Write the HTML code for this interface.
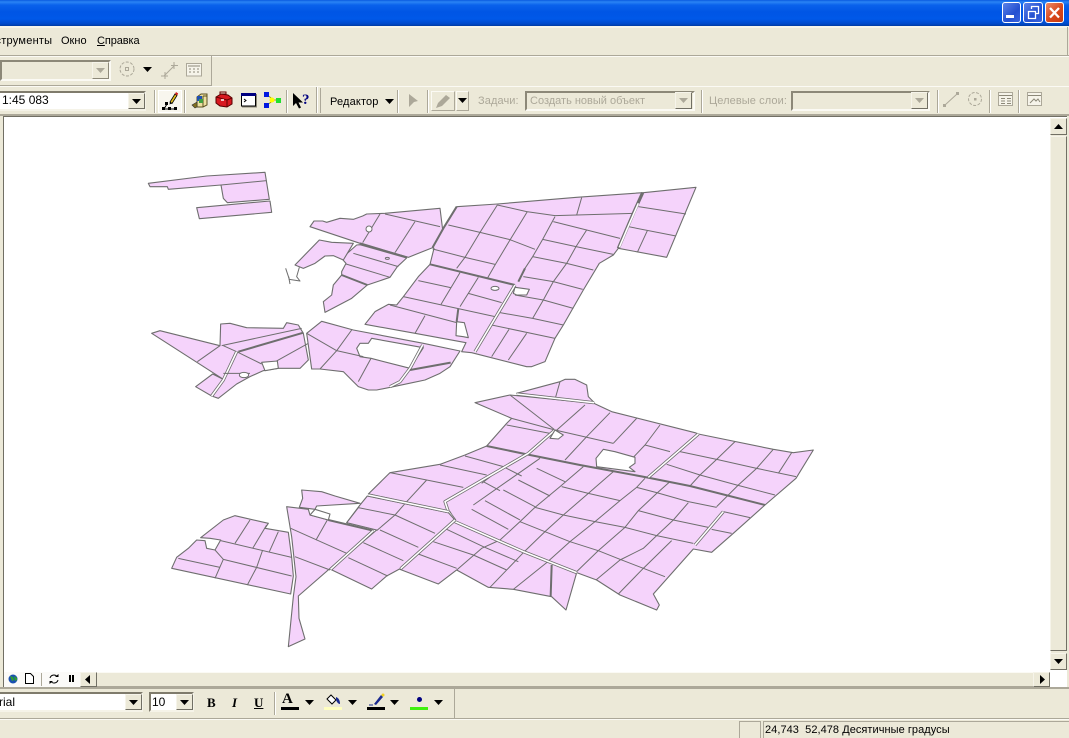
<!DOCTYPE html>
<html><head><meta charset="utf-8"><style>
html,body{margin:0;padding:0;background:#ece9d8}
#r{position:relative;width:1069px;height:738px;overflow:hidden;background:#ece9d8;font:11px "Liberation Sans",sans-serif;color:#000}
#r div,#r span.t{position:absolute}
.t{white-space:nowrap;line-height:13px}
.g{color:#aca899}
.sep{width:1px;background:#aca899;border-right:1px solid #fff}
.combo{background:#fff;border:2px solid #7f7b6c;border-right-color:#f5f3e8;border-bottom-color:#f5f3e8;box-sizing:border-box}
.off{border:2px solid #8c8878;border-right-color:#fbfaf4;border-bottom-color:#fbfaf4;box-sizing:border-box}
.btn{background:#ece9d8;border:1px solid #f6f4ea;border-right-color:#716f64;border-bottom-color:#716f64;box-sizing:border-box}
.win{border:1px solid #fff;border-radius:3px;box-sizing:border-box;background:linear-gradient(135deg,#5b82e8,#2450d0 60%,#3a64de)}
svg{position:absolute;overflow:visible}
#m polygon,#m polyline,#m path,#m ellipse,#m circle{vector-effect:non-scaling-stroke;stroke-linejoin:round}
#m polygon{fill:#f5d3fb;stroke:#6e6e6e;stroke-width:1.100}
#m .h{fill:#fff}
#m .l{fill:none;stroke:#6e6e6e;stroke-width:1}
#m .k{fill:none;stroke:#6e6e6e;stroke-width:2}
#m .ro{fill:none;stroke:#6e6e6e;stroke-width:3.200}
#m .ri{fill:none;stroke:#fff;stroke-width:1.600}
</style></head><body><div id="r">

<div style="left:0;top:0;width:1069px;height:26px;background:linear-gradient(#0a5ae0 0,#2a84f4 2px,#0a62ec 5px,#0055e5 12px,#0058e8 19px,#0048c8 24px,#003aa0 26px)"></div>
<div class="win" style="left:1002px;top:2px;width:19px;height:21px"></div>
<div style="left:1006px;top:15px;width:8px;height:3px;background:#fff"></div>
<div class="win" style="left:1023px;top:2px;width:20px;height:21px"></div>
<svg style="left:1023px;top:2px" width="20" height="21"><path d="M5.500 9.500h7v7h-7zM8.500 7V4.500h7v7h-3" fill="none" stroke="#fff" stroke-width="1.300"/></svg>
<div class="win" style="left:1045px;top:2px;width:19px;height:21px;background:linear-gradient(135deg,#ec8a6a,#d8481c 55%,#c83a10)"></div>
<svg style="left:1045px;top:2px" width="19" height="21"><path d="M5 6l9 9.500M14 6l-9 9.500" stroke="#fff" stroke-width="2.300"/></svg>

<div style="left:0;top:26px;width:1069px;height:2px;background:#f6f4ea"></div>
<span class="t" style="left:-19px;top:35px;letter-spacing:.25px">Инструменты</span>
<span class="t" style="left:61px;top:35px">Окно</span>
<span class="t" style="left:97px;top:35px;letter-spacing:-.1px"><u>С</u>правка</span>
<div style="left:0;top:55px;width:1069px;height:1px;background:#aca899"></div>
<div style="left:0;top:56px;width:1069px;height:1px;background:#fbfaf4"></div>
<div style="left:1067px;top:27px;width:1px;height:28px;background:#aca899"></div>

<div style="left:0;top:85px;width:212px;height:1px;background:#aca899"></div>
<div style="left:211px;top:56px;width:1px;height:30px;background:#aca899"></div>
<div class="off" style="left:0;top:60px;width:111px;height:21px"></div>
<div class="btn" style="left:92px;top:62px;width:17px;height:17px;border-right-color:#8c8878;border-bottom-color:#8c8878"></div>
<svg style="left:96px;top:68px" width="9" height="5"><path d="M0 0h9L4.500 5z" fill="#aca899"/></svg>
<svg style="left:118px;top:60px" width="20" height="20"><circle cx="9" cy="9" r="7" fill="none" stroke="#aca899" stroke-dasharray="3 1.500"/><rect x="7.500" y="7.500" width="3" height="3" fill="none" stroke="#aca899"/></svg>
<svg style="left:143px;top:67px" width="9" height="5"><path d="M0 0h9L4.500 5z" fill="#000"/></svg>
<svg style="left:161px;top:61px" width="18" height="18"><path d="M3 15L14 4M13 1v7M10 4.500h7M4 11v7M0 15h7" stroke="#aca899" fill="none"/></svg>
<svg style="left:186px;top:63px" width="16" height="14"><rect x=".5" y=".5" width="15" height="12.500" fill="#f6f4ea" stroke="#aca899"/><path d="M2 3h12M3 6h2M7 6h2M11 6h2M3 9h2M7 9h2M11 9h2" stroke="#8c8878"/></svg>

<div style="left:0;top:86px;width:1069px;height:1px;background:#fbfaf4"></div>
<div class="combo" style="left:0;top:91px;width:146px;height:20px;border-left:0"></div>
<span class="t" style="left:2px;top:94px;font-size:12px">1:45 083</span>
<div class="btn" style="left:128px;top:93px;width:17px;height:16px"></div>
<svg style="left:132px;top:99px" width="9" height="5"><path d="M0 0h9L4.500 5z"/></svg>
<div class="sep" style="left:154px;top:90px;height:23px"></div>

<div style="left:158px;top:90px;width:24px;height:23px;background:#f8f6ee;border:1px solid #fff;box-sizing:border-box"></div>
<svg style="left:158px;top:90px" width="24" height="23"><path d="M6 19h12M6 19l3-5" stroke="#000"/><rect x="4" y="17" width="3" height="3"/><rect x="10" y="17" width="3" height="3"/><rect x="16" y="17" width="3" height="3"/><rect x="7" y="12" width="3" height="3"/><path d="M12 12l5-8 2 1.500-5 8z" fill="#e6c020" stroke="#000" stroke-width=".8"/><path d="M17 4l1-2 2.200 1.500-1 2z" fill="#d02020"/><path d="M12 12l-.5 2.500 2.200-1z" fill="#000"/></svg>
<div class="sep" style="left:184px;top:90px;height:23px"></div>

<svg style="left:192px;top:91px" width="17" height="18"><path d="M5 6l4-3h6v11l-4 2H5z" fill="#ece0a0" stroke="#5a5020"/><path d="M11 5h4M11 5v11" stroke="#5a5020"/><rect x="5" y="5" width="5" height="5" fill="#2050b0"/><rect x="7" y="8" width="4" height="4" fill="#40a040"/><path d="M0 14l5-3v5l-2 1z" fill="#807020" stroke="#333" stroke-width=".6"/></svg>
<svg style="left:216px;top:92px" width="17" height="16"><path d="M0 5l5-3 7 1 4 3v6l-5 3-7-1-4-3z" fill="#d81820" stroke="#500"/><path d="M0 5l11 3 5-2M11 8v7" stroke="#600" fill="none"/><rect x="4" y="0" width="6" height="2" fill="none" stroke="#600"/><rect x="5" y="7" width="3" height="2" fill="#f0c0c0"/></svg>
<svg style="left:241px;top:93px" width="16" height="14"><rect x=".5" y=".5" width="14" height="12.500" fill="#fff" stroke="#000"/><rect x="0" y="0" width="15" height="3" fill="#000080"/><path d="M3 6l2 1.500L3 9" stroke="#000" fill="none"/><path d="M15.500 1v13H1" stroke="#8c8878" fill="none"/></svg>
<svg style="left:264px;top:92px" width="17" height="16"><path d="M3 3l7 5M3 13l7-5M10 8h5" stroke="#a0a000"/><rect x="0" y="0" width="5" height="5" fill="#0018e0"/><rect x="0" y="11" width="5" height="5" fill="#0018e0"/><circle cx="8" cy="8" r="2.500" fill="#ffff00"/><rect x="12" y="6" width="5" height="5" fill="#20e030"/></svg>
<div class="sep" style="left:286px;top:90px;height:23px"></div>
<svg style="left:293px;top:93px" width="18" height="16"><path d="M0 0v13l3-3 3 5.500 2-1-2.500-5H10z" fill="#000"/><text x="9" y="11" font-family="Liberation Serif,serif" font-size="15" font-weight="700" fill="#000080">?</text></svg>
<div class="sep" style="left:316px;top:87px;height:26px"></div>
<div style="left:320px;top:88px;width:1px;height:25px;background:#aca899"></div>

<span class="t" style="left:330px;top:96px;letter-spacing:.15px">Редактор</span>
<svg style="left:385px;top:99px" width="9" height="5"><path d="M0 0h9L4.500 5z"/></svg>
<div class="sep" style="left:397px;top:90px;height:23px"></div>
<svg style="left:408px;top:94px" width="11" height="14"><path d="M1 0l9 7-4 1-5 5z" fill="#aca899"/></svg>
<div class="sep" style="left:427px;top:90px;height:23px"></div>
<div class="btn" style="left:431px;top:91px;width:24px;height:20px;border-color:#fbfaf4 #aca899 #aca899 #fbfaf4"></div>
<svg style="left:435px;top:93px" width="16" height="16"><path d="M1 15l2-5 8-8 4 3-8 8z" fill="#aca899"/></svg>
<div class="btn" style="left:456px;top:91px;width:13px;height:20px;border-color:#fbfaf4 #aca899 #aca899 #fbfaf4"></div>
<svg style="left:458px;top:98px" width="9" height="5"><path d="M0 0h9L4.500 5z"/></svg>

<span class="t g" style="left:478px;top:95px;letter-spacing:.1px">Задачи:</span>
<div class="off" style="left:525px;top:91px;width:170px;height:20px"></div>
<span class="t g" style="left:530px;top:95px">Создать новый объект</span>
<div class="btn" style="left:675px;top:92px;width:17px;height:17px"></div>
<svg style="left:679px;top:98px" width="9" height="5"><path d="M0 0h9L4.500 5z" fill="#aca899"/></svg>
<div class="sep" style="left:701px;top:90px;height:23px"></div>
<span class="t g" style="left:709px;top:95px;letter-spacing:.1px">Целевые слои:</span>
<div class="off" style="left:791px;top:91px;width:139px;height:20px"></div>
<div class="btn" style="left:911px;top:92px;width:17px;height:17px"></div>
<svg style="left:915px;top:98px" width="9" height="5"><path d="M0 0h9L4.500 5z" fill="#aca899"/></svg>
<div class="sep" style="left:937px;top:90px;height:23px"></div>
<svg style="left:943px;top:91px" width="16" height="16"><path d="M2 14L14 3" stroke="#aca899"/><rect x="0" y="13" width="3" height="3" fill="#aca899"/><rect x="13" y="1" width="3" height="3" fill="#aca899"/></svg>
<svg style="left:967px;top:91px" width="17" height="17"><circle cx="8" cy="8" r="6.500" fill="none" stroke="#aca899" stroke-dasharray="3 1.500"/><rect x="7" y="7" width="2.500" height="2.500" fill="#aca899"/></svg>
<div class="sep" style="left:989px;top:90px;height:23px"></div>
<svg style="left:998px;top:92px" width="16" height="15"><rect x=".5" y=".5" width="14" height="13" fill="#f6f4ea" stroke="#aca899"/><path d="M1 3.500h13M3 6.500h4M9 6.500h4M3 9h4M9 9h4M3 11.500h4M9 11.500h4" stroke="#8c8878"/></svg>
<div class="sep" style="left:1018px;top:90px;height:23px"></div>
<svg style="left:1027px;top:92px" width="16" height="15"><rect x=".5" y=".5" width="14" height="13" fill="#f6f4ea" stroke="#aca899"/><path d="M1 3.500h13M3 11l4-4 2 2 2-2 2 3" stroke="#8c8878" fill="none"/></svg>

<div style="left:0;top:114px;width:1069px;height:2px;background:#aca899"></div>
<div style="left:3px;top:116px;width:1064px;height:1px;background:#716f64"></div>
<div style="left:3px;top:116px;width:1px;height:556px;background:#716f64"></div>
<div style="left:4px;top:117px;width:1063px;height:555px;background:#fff"></div>

<svg id="m" style="left:0;top:0" width="1069" height="738" viewBox="0 0 1069 738">
<g transform="translate(140 160) scale(.33333)">
<polygon points="25,70 200,48 375,37 388,118 262,128 250,115 243,75 85,88 82,80 30,80"/>
<polyline class="l" points="243,75 380,62"/>
<polygon points="170,143 390,123 395,157 178,176"/>
<polygon points="510,200 522,183 548,183 560,187 600,175 640,178 668,168 680,162 735,160 900,145 910,225 880,262 805,292 660,250"/>
<polyline class="l" points="720,162 668,248"/>
<polyline class="l" points="735,162 900,200"/>
<polyline class="l" points="825,185 765,278"/>
<circle class="h" cx="687" cy="207" r="9" stroke="#6e6e6e"/>
<polyline class="k" points="660,250 800,292"/>
<polygon points="660,254 800,294 772,320 750,352 682,375 635,415 555,457 550,425 575,405 580,375 605,345 605,335 618,310 605,295 650,255"/>
<polyline class="l" points="640,280 775,320"/>
<polyline class="l" points="618,312 750,352"/>
<polyline class="k" points="605,345 682,375"/>
<ellipse class="l" cx="742" cy="295" rx="6" ry="3"/>
<polygon points="465,315 538,240 575,247 640,250 610,300 580,287 555,288 525,310 490,325"/>
<polyline class="l" points="437,325 448,358 480,363 470,350 478,322"/>
<polyline class="l" points="450,372 446,350"/>
<polygon points="35,520 60,512 240,557 242,492 270,490 320,503 430,505 440,488 475,495 490,520 505,600 480,625 415,625 370,632 330,650 290,672 235,715 215,708 167,680 218,642 250,658"/>
<polyline class="l" points="245,557 485,505"/>
<polyline class="k" points="295,575 490,518"/>
<polyline class="l" points="240,557 172,605"/>
<polyline class="l" points="250,557 290,575 365,612"/>
<polyline class="ro" points="290,575 250,660 215,708"/>
<polyline class="ri" points="290,575 250,660 215,708"/>
<polyline class="l" points="250,640 330,640"/>
<polyline class="l" points="505,550 410,603"/>
<polygon style="fill:#fff" points="365,607 412,603 415,625 375,632"/>
<ellipse class="h" cx="312" cy="645" rx="14" ry="8" stroke="#6e6e6e"/>
</g>
<g transform="translate(360 170) scale(.33333)">
<polygon points="290,110 412,102 650,82 848,68 820,130 775,235 760,255 718,280 670,360 610,465 585,505 555,575 515,590 500,590 335,548 305,545 318,518 165,490 15,463 45,425 85,403 110,405 130,380 175,320 210,283 222,235 218,232 250,175"/>
<polygon points="850,68 1008,52 920,262 775,235 822,130"/>
<polyline class="l" points="835,110 978,132"/>
<polyline class="l" points="805,170 948,198"/>
<polyline class="l" points="862,182 832,247"/>
<polyline class="l" points="265,165 360,187 447,208 525,238"/>
<polyline class="l" points="412,105 500,125 585,137 820,130"/>
<polyline class="l" points="580,155 680,180 780,205"/>
<polyline class="l" points="650,135 665,83"/>
<polyline class="l" points="548,208 648,230 760,253"/>
<polyline class="l" points="518,260 620,280 700,300"/>
<polyline class="l" points="490,320 580,335 668,358"/>
<polyline class="l" points="465,375 550,390 640,415"/>
<polyline class="l" points="420,428 518,445 610,465"/>
<polyline class="l" points="395,465 585,505"/>
<polyline class="l" points="412,105 360,187 315,262 290,295"/>
<polyline class="l" points="502,125 447,215 405,285 382,325"/>
<polyline class="l" points="585,140 548,208 518,260 495,295"/>
<polyline class="l" points="680,180 648,230 620,280 580,335 550,390 518,445"/>
<polyline class="l" points="447,478 395,560"/>
<polyline class="l" points="500,490 445,570"/>
<polyline class="l" points="218,237 315,262 405,283"/>
<polyline class="l" points="175,332 272,353"/>
<polyline class="l" points="130,380 405,440"/>
<polyline class="l" points="300,308 243,403"/>
<polyline class="l" points="355,322 300,410"/>
<polyline class="l" points="325,370 425,398"/>
<polyline class="l" points="90,405 290,458"/>
<polyline class="l" points="195,437 165,490"/>
<polyline class="k" points="210,283 465,345"/>
<polyline class="k" points="218,232 250,175 290,110"/>
<polyline class="k" points="495,295 475,335"/>
<polyline class="ro" points="848,68 820,130 775,235"/>
<polyline class="ri" points="835,100 800,180 778,232"/>
<polyline class="ro" points="465,345 345,545"/>
<polyline class="ri" points="465,345 345,545"/>
<polyline class="k" points="295,415 290,455"/>
<polygon style="fill:#fff" points="290,455 313,458 325,503 310,500 288,497"/>
<polygon style="fill:#fff" points="465,352 508,358 500,375 470,375 460,370"/>
<ellipse class="h" cx="405" cy="355" rx="12" ry="6" stroke="#6e6e6e"/>
<polygon points="-160,490 -115,454 -20,480 190,520 300,543 270,590 240,610 195,630 100,650 50,660 25,660 -5,650 -50,605 -120,597 -145,597"/>
<polygon style="fill:#fff" points="0,520 25,520 35,505 190,533 150,595 33,565 0,560 -10,535"/>
<polyline class="l" points="-160,490 -70,542"/>
<polyline class="l" points="-25,480 -70,542 -120,597"/>
<polyline class="l" points="-70,542 10,560"/>
<polyline class="l" points="33,565 -5,635"/>
<polyline class="ro" points="188,525 150,595 120,635 90,650"/>
<polyline class="ri" points="188,525 150,595 120,635 90,650"/>
<polyline class="k" points="150,600 272,578"/>
</g>
<g transform="translate(440 370) scale(.33333)">
<polygon points="230,70 360,35 375,28 405,28 440,45 445,80 462,97"/>
<polyline class="l" points="360,35 345,88"/>
<polygon points="105,98 210,75 462,100 515,125 765,188 775,192 1000,238 1060,248 1120,240 1068,325 975,405 880,490 815,547 760,537 640,672 658,705 650,720 540,675 470,630 410,608 378,720 335,680 220,658 145,652 50,600 -5,642 -120,598 45,452 30,425 -215,372 -150,308 0,283 75,255 140,228 200,160 215,145"/>
<polyline class="l" points="210,75 345,180"/>
<polyline class="l" points="215,145 345,180 520,220"/>
<polyline class="l" points="200,165 330,190"/>
<polyline class="l" points="435,105 345,185"/>
<polyline class="l" points="510,128 440,200 375,270"/>
<polyline class="l" points="590,145 520,220"/>
<polyline class="l" points="660,165 615,225 580,262"/>
<polyline class="l" points="615,225 690,245"/>
<polyline class="l" points="720,245 830,268 950,295 1068,320"/>
<polyline class="l" points="680,283 780,315 890,345 1005,375"/>
<polyline class="l" points="590,352 650,368 745,395 830,412"/>
<polyline class="l" points="850,425 930,443"/>
<polyline class="l" points="595,422 700,450 805,472"/>
<polyline class="l" points="815,478 875,490"/>
<polyline class="l" points="365,350 445,370 540,392"/>
<polyline class="l" points="285,412 370,435 465,455 555,472 650,497 760,520"/>
<polyline class="l" points="885,215 830,268 780,315 750,348"/>
<polyline class="l" points="1000,238 950,295 895,345 830,410"/>
<polyline class="l" points="1055,248 1015,310"/>
<polyline class="l" points="430,290 360,350 285,412 240,455 180,510 125,535 50,600"/>
<polyline class="l" points="520,305 445,370 370,435 315,485 250,548 150,652"/>
<polyline class="l" points="615,325 590,352 540,392 465,455 390,515 320,578 220,658"/>
<polyline class="l" points="690,335 650,370 595,422 555,472 475,542 410,605"/>
<polyline class="l" points="745,398 700,450 650,497 610,535 540,570 468,630"/>
<polyline class="l" points="695,512 610,595 535,672"/>
<polyline class="l" points="240,455 315,485 390,515 475,542 540,568 610,595 675,620"/>
<polyline class="l" points="95,418 205,478"/>
<polyline class="l" points="135,392 240,450"/>
<polyline class="l" points="235,330 330,378"/>
<polyline class="l" points="190,360 285,410"/>
<polyline class="l" points="290,295 375,335"/>
<polyline class="l" points="130,335 180,362"/>
<polyline class="l" points="75,258 190,290 245,318"/>
<polyline class="l" points="190,290 125,340"/>
<polyline class="l" points="300,265 100,405"/>
<polyline class="l" points="20,478 130,530 235,575"/>
<polyline class="l" points="-20,515 100,555 200,600"/>
<polyline class="l" points="-65,552 50,595"/>
<polyline class="l" points="0,285 140,315"/>
<polyline class="l" points="-150,308 70,352"/>
<polyline class="l" points="-40,330 -100,395"/>
<polyline class="k" points="140,228 270,255 420,285 620,322 750,348 975,405"/>
<polyline class="k" points="335,585 332,678"/>
<polyline class="ro" points="45,452 25,425 15,395 265,250 345,180"/>
<polyline class="ri" points="45,452 25,425 15,395 265,250 345,180"/>
<polyline class="ro" points="775,192 625,322"/>
<polyline class="ri" points="775,192 625,322"/>
<polyline class="ro" points="850,425 765,525"/>
<polyline class="ri" points="850,425 765,525"/>
<polyline class="ro" points="45,455 250,545 410,608"/>
<polyline class="ri" points="45,455 250,545 410,608"/>
<polyline class="ro" points="230,72 462,98"/>
<polyline class="ri" points="230,72 462,98"/>
<polygon style="fill:#fff" points="345,180 370,195 355,207 330,205"/>
<polygon style="fill:#fff" points="490,238 525,245 585,262 585,280 568,292 585,305 470,290 468,265"/>
</g>
<g transform="translate(160 470) scale(.33333)">
<polygon points="425,60 485,65 525,78 600,100 470,108 465,118 418,112 428,85"/>
<polygon points="380,110 445,118 450,135 505,150 640,182 415,378 417,445 435,507 385,530 400,380 408,320 395,200"/>
<polyline class="l" points="392,175 560,250"/>
<polyline class="l" points="405,260 510,300"/>
<polyline class="l" points="502,150 468,210"/>
<polyline class="k" points="505,150 640,182"/>
<polygon style="fill:#fff" points="465,118 510,132 505,150 450,135"/>
<polygon points="622,78 865,128 885,150 722,295 680,318 635,357 512,298 650,180 560,158 600,105"/>
<polyline class="l" points="595,113 705,135 825,190"/>
<polyline class="l" points="660,180 775,232"/>
<polyline class="l" points="610,218 730,272"/>
<polyline class="l" points="565,263 683,318"/>
<polyline class="l" points="740,95 705,135 650,182"/>
<polyline class="l" points="595,113 560,158"/>
<polyline class="ro" points="640,182 512,298"/>
<polyline class="ri" points="640,182 512,298"/>
<polyline class="ro" points="885,150 722,296"/>
<polyline class="ri" points="885,150 722,296"/>
<polyline class="ro" points="625,75 865,125"/>
<polyline class="ri" points="625,75 865,125"/>
<polygon points="122,203 190,150 225,137 325,160 315,175 385,187 395,262 400,318 392,372 35,295 50,262 85,235 110,210 135,212 140,235 165,240 182,210 150,205"/>
<polyline class="l" points="270,150 225,220"/>
<polyline class="l" points="320,165 278,235"/>
<polyline class="l" points="355,185 328,245"/>
<polyline class="l" points="165,240 190,268 395,318"/>
<polyline class="l" points="190,268 165,325"/>
<polyline class="l" points="55,265 180,292"/>
<polyline class="l" points="182,212 395,262"/>
<polyline class="l" points="308,240 290,292 262,345"/>
</g>
</svg>

<div style="left:1050px;top:118px;width:17px;height:552px;background:#ece9d8;border-left:1px solid #fbfaf4;box-sizing:border-box"></div>
<div class="btn" style="left:1050px;top:118px;width:17px;height:17px"></div>
<svg style="left:1054px;top:124px" width="9" height="5"><path d="M0 5h9L4.500 0z"/></svg>
<div class="btn" style="left:1050px;top:136px;width:17px;height:515px"></div>
<div class="btn" style="left:1050px;top:653px;width:17px;height:17px"></div>
<svg style="left:1054px;top:659px" width="9" height="5"><path d="M0 0h9L4.500 5z"/></svg>

<div style="left:0;top:116px;width:3px;height:572px;background:#ece9d8"></div>
<div style="left:3px;top:670px;width:1px;height:18px;background:#716f64"></div>
<div style="left:4px;top:672px;width:76px;height:15px;background:#fbfaf8"></div>
<svg style="left:8px;top:672px" width="14" height="14"><circle cx="5" cy="7" r="4.500" fill="#1a50b0"/><path d="M2 4l3 1 1 3-2 1zM6 4l3 2v2l-2 1z" fill="#30a030"/></svg>
<svg style="left:25px;top:673px" width="9" height="11"><path d="M.5.500h5l3 3v7h-8z" fill="#fff" stroke="#000"/></svg>
<div style="left:41px;top:673px;width:1px;height:13px;background:#aca899"></div>
<svg style="left:49px;top:674px" width="10" height="10"><path d="M1 4a4 4 0 0 1 7-1.500M9 6a4 4 0 0 1-7 1.500" fill="none" stroke="#000"/><path d="M6 3h3.500V0zM4 7H.5v3z"/></svg>
<div style="left:69px;top:675px;width:2px;height:7px;background:#000"></div>
<div style="left:72px;top:675px;width:2px;height:7px;background:#000"></div>
<div class="btn" style="left:80px;top:672px;width:17px;height:15px"></div>
<svg style="left:85px;top:675px" width="5" height="9"><path d="M5 0v9L0 4.500z"/></svg>
<div style="left:97px;top:672px;width:936px;height:15px;background:#ece9d8;border-bottom:1px solid #aca899;border-top:1px solid #fbfaf4;box-sizing:border-box"></div>
<div class="btn" style="left:1033px;top:672px;width:17px;height:15px"></div>
<svg style="left:1040px;top:675px" width="5" height="9"><path d="M0 0v9l5-4.500z"/></svg>
<div style="left:1050px;top:670px;width:17px;height:17px;background:#fff"></div>
<div style="left:1067px;top:116px;width:2px;height:572px;background:#ece9d8"></div>
<div style="left:0;top:687px;width:1069px;height:2px;background:#aca899"></div>

<div class="combo" style="left:0;top:692px;width:143px;height:20px;border-left:0"></div>
<span class="t" style="left:-9px;top:696px;font-size:12px">Arial</span>
<div class="btn" style="left:125px;top:694px;width:17px;height:16px"></div>
<svg style="left:129px;top:700px" width="9" height="5"><path d="M0 0h9L4.500 5z"/></svg>
<div class="combo" style="left:149px;top:692px;width:45px;height:20px"></div>
<span class="t" style="left:152px;top:696px;font-size:12px">10</span>
<div class="btn" style="left:176px;top:694px;width:17px;height:16px"></div>
<svg style="left:180px;top:700px" width="9" height="5"><path d="M0 0h9L4.500 5z"/></svg>
<span class="t" style="left:207px;top:696px;font:700 13px/13px 'Liberation Serif',serif">B</span>
<span class="t" style="left:232px;top:696px;font:italic 700 13px/13px 'Liberation Serif',serif">I</span>
<span class="t" style="left:254px;top:696px;font:700 13px/13px 'Liberation Serif',serif;text-decoration:underline">U</span>
<div class="sep" style="left:274px;top:692px;height:23px"></div>
<span class="t" style="left:282px;top:692px;font:700 15px/15px 'Liberation Serif',serif">A</span>
<div style="left:281px;top:707px;width:18px;height:3px;background:#000"></div>
<svg style="left:305px;top:700px" width="9" height="5"><path d="M0 0h9L4.500 5z"/></svg>
<svg style="left:326px;top:694px" width="16" height="12"><path d="M1 5l4-4 5 5-4 4z" fill="#fff" stroke="#000"/><path d="M10 3c3 1 4 4 4 7-2 0-3-2-4-4z" fill="#1a2a90"/></svg>
<div style="left:324px;top:707px;width:18px;height:3px;background:#ffffc0"></div>
<svg style="left:348px;top:700px" width="9" height="5"><path d="M0 0h9L4.500 5z"/></svg>
<svg style="left:368px;top:693px" width="17" height="13"><path d="M6 11L13 2l2 2-7 8z" fill="#1a2a90"/><circle cx="15" cy="2" r="1.500" fill="#f0d020"/><path d="M1 12h4" stroke="#1a2a90"/></svg>
<div style="left:367px;top:707px;width:18px;height:3px;background:#000"></div>
<svg style="left:390px;top:700px" width="9" height="5"><path d="M0 0h9L4.500 5z"/></svg>
<div style="left:417px;top:697px;width:5px;height:5px;border-radius:50%;background:#000080"></div>
<div style="left:410px;top:707px;width:18px;height:3px;background:#40f010"></div>
<svg style="left:434px;top:700px" width="9" height="5"><path d="M0 0h9L4.500 5z"/></svg>
<div style="left:454px;top:689px;width:1px;height:29px;background:#aca899"></div>
<div style="left:0;top:718px;width:1069px;height:1px;background:#aca899"></div>
<div style="left:0;top:719px;width:1069px;height:1px;background:#fbfaf4"></div>

<div style="left:739px;top:721px;width:22px;height:17px;border:1px solid #aca899;border-bottom:0;box-sizing:border-box"></div>
<div style="left:763px;top:721px;width:306px;height:17px;border:1px solid #aca899;border-bottom:0;border-right:0;box-sizing:border-box"></div>
<span class="t" style="left:765px;top:724px;letter-spacing:.05px">24,743&nbsp; 52,478 Десятичные градусы</span>
</div></body></html>
